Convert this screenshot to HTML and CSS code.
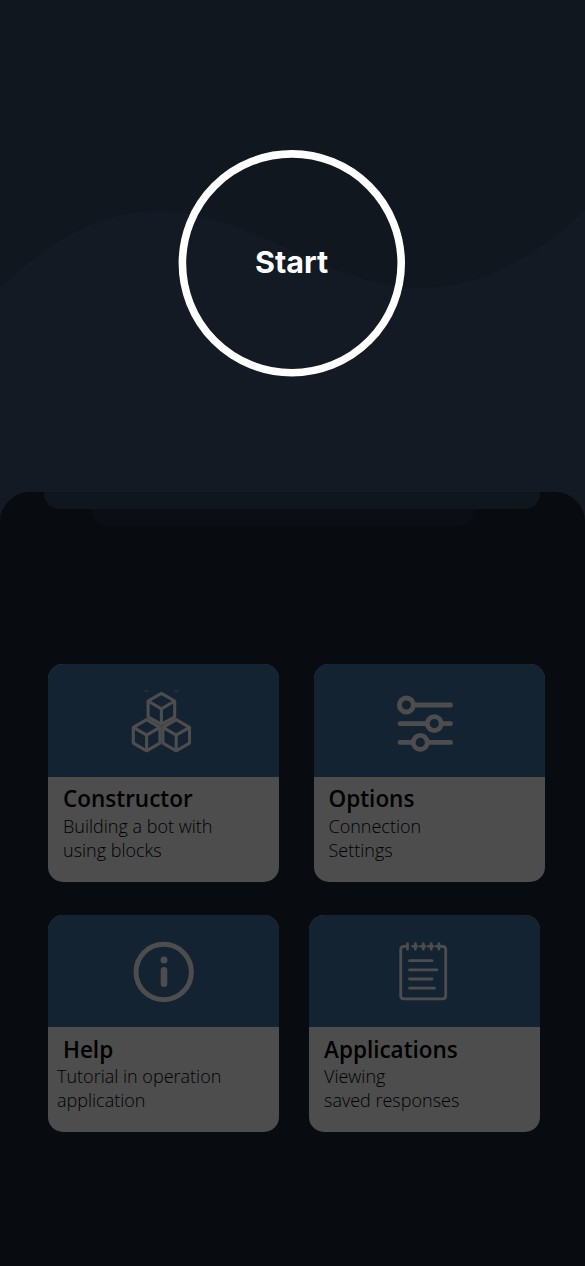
FILE: index.html
```
<!DOCTYPE html>
<html lang="en">
<head>
<meta charset="utf-8">
<title>Start</title>
<link rel="stylesheet" href="styles.css">
</head>
<body>
<main class="screen">
  <section class="hero">
    <svg class="wave" viewBox="0 0 585 530" aria-hidden="true">
      <path d="M0 288C54 236 105 211 159 211C249 211 330 288 421 288C475 288 531 262 585 210V530H0Z"/>
    </svg>
    <button class="start">
      <svg class="ring" viewBox="0 0 227 227" aria-hidden="true"><circle cx="113.8" cy="113.3" r="109.4"/></svg>
      <span class="label">Start</span>
    </button>
  </section>
  <section class="sheet">
    <div class="tab"></div>
    <div class="tab tab-small"></div>
    <div class="cards">
      <div class="row row-wide">
        <article class="card">
          <div class="cover">
            <svg class="icon" width="85" height="80" viewBox="0 0 85 80">
              <g stroke-width="3.1" stroke-linejoin="round">
                <path id="cube" d="M41.4 13.7L54.7 21.4V37.2L41.4 44.8L28.1 37.2V21.4ZM28.1 21.4L41.4 29.2L54.7 21.4M41.4 29.2V44.8"/>
                <use href="#cube" x="-14.8" y="26.4"/>
                <use href="#cube" x="14.8" y="26.4"/>
              </g>
              <path stroke-width=".6" d="M24.5 11.4H28.5M54.5 11.4H58.5"/>
            </svg>
          </div>
          <div class="copy"><h2>Constructor</h2><p>Building a bot with<br>using blocks</p></div>
        </article>
        <article class="card card-offset">
          <div class="cover">
            <svg class="icon" width="80" height="75" viewBox="0 0 80 75">
              <g stroke-width="4.8" stroke-linecap="round">
                <path d="M30 20.4H65.6M15 39H41M58 39H65.6M15 57.8H27M44 57.8H65.6"/>
                <circle cx="21.4" cy="20.4" r="7"/>
                <circle cx="49.3" cy="39" r="7"/>
                <circle cx="35.3" cy="57.8" r="7"/>
              </g>
            </svg>
          </div>
          <div class="copy"><h2>Options</h2><p>Connection<br>Settings</p></div>
        </article>
      </div>
      <div class="row">
        <article class="card">
          <div class="cover">
            <svg class="icon" width="80" height="80" viewBox="0 0 80 80">
              <circle cx="38.7" cy="42" r="27.7" stroke-width="5"/>
              <circle class="dot" cx="39" cy="30" r="3.5"/>
              <path d="M39 40.3V53.7" stroke-width="6.6" stroke-linecap="round"/>
            </svg>
          </div>
          <div class="copy copy-help"><h2>Help</h2><p>Tutorial in operation<br>application</p></div>
        </article>
        <article class="card">
          <div class="cover">
            <svg class="icon" width="80" height="80" viewBox="0 0 80 80">
              <g stroke-width="2.8" stroke-linecap="round">
                <path d="M22 16.3H19Q15.7 16.3 15.7 19.5V65.7Q15.7 68.8 19 68.8H57.5Q60.7 68.8 60.7 65.7V19.5Q60.7 16.3 57.5 16.3H56"/>
                <path d="M22.5 13.7V19.2M30.4 13.7V19.2M38.3 13.7V19.2M46.2 13.7V19.2M54 13.7V19.2"/>
                <path d="M27.5 16.3H32.4M35.3 16.3H40.3M43.2 16.3H48.2M51 16.3H56" stroke-width="2.4"/>
                <path d="M24.5 30.7H47M24.5 39.8H52M24.5 49H47M24.5 58.2H49.5"/>
              </g>
            </svg>
          </div>
          <div class="copy"><h2>Applications</h2><p>Viewing<br>saved responses</p></div>
        </article>
      </div>
    </div>
  </section>
</main>
</body>
</html>
```
FILE: styles.css
```
* { box-sizing: border-box; }
body { margin: 0; background: #131a24; font-family: "Open Sans", sans-serif; }
.screen { width: 585px; height: 1266px; display: flex; flex-direction: column; overflow: hidden; }
.hero { position: relative; height: 492px; flex: none; display: flex; justify-content: center; padding-top: 150px; background: #10171f; }
.wave { position: absolute; top: 0; left: 0; width: 585px; height: 530px; fill: #131a24; }
.start { position: relative; width: 227px; height: 227px; margin-right: 2px; padding: 0 0 5px; border: 0; border-radius: 50%; background: none; color: #fff; font: 700 30.5px Inter, sans-serif; }
.ring { position: absolute; inset: 0; fill: none; stroke: #fff; stroke-width: 7.6; }
.sheet { position: relative; flex: 1; border-radius: 30px 30px 0 0; background: #080b0f; display: flex; flex-direction: column; }
.tab { width: 496px; height: 16.5px; margin-left: 44px; flex: none; border-radius: 0 0 15px 15px; background: #10161e; }
.tab-small { width: 382px; height: 17.5px; margin-left: 92px; background: #0b0e14; }
.cards { display: flex; flex-direction: column; gap: 33px; padding: 138.4px 0 0 48px; }
.row { display: flex; gap: 30px; }
.row-wide { gap: 34.5px; }
.card { width: 231px; height: 217.5px; overflow: hidden; border-radius: 15px; background: #4d4d4d; }
.cover { height: 112.5px; background: #142331; }
.icon { display: block; fill: none; stroke: #4d4d4d; }
.row-wide .icon { margin-left: 72px; transform: translateY(15.6px); }
.row-wide .card-offset .icon { margin-left: 71.5px; transform: translateY(20.6px); }
.row:not(.row-wide) .icon { margin-left: 75.5px; transform: translateY(15px); }
.row:not(.row-wide) .card:first-child .icon { margin-left: 77px; }
.icon .dot { fill: #4d4d4d; stroke: none; }
.copy { padding: 7px 15px 0; color: #000; }
.copy h2 { margin: 0; padding-top: 2px; font-size: 22.5px; line-height: 28px; font-weight: 600; }
.row-wide .copy h2 { padding-top: 0; line-height: 30px; }
.copy p { margin: 0; font-size: 18px; line-height: 24px; font-weight: 300; white-space: nowrap; }
.copy-help p { margin-left: -6px; }
```
